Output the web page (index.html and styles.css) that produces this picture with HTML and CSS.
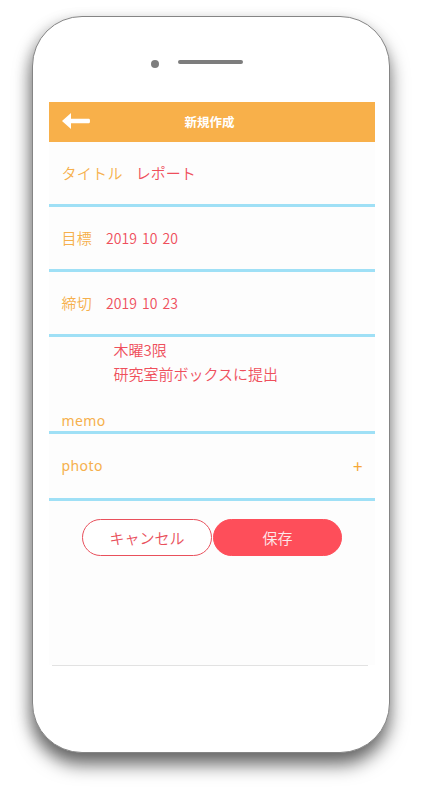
FILE: index.html
```html
<!DOCTYPE html>
<html lang="ja">
<head>
<meta charset="utf-8">
<link rel="stylesheet" href="styles.css">
</head>
<body>
<div class="phone">
  <div class="top">
    <span class="cam"></span>
    <span class="speaker"></span>
  </div>
  <div class="screen">
    <header class="bar">
      <svg class="back" width="28" height="16" viewBox="0 0 28 16"><path d="M0 8 L9 0 L9 5.8 L27 5.8 Q28 5.8 28 8 Q28 10.2 27 10.2 L9 10.2 L9 16 Z" fill="#fff"/></svg>
      <span class="bar-title">新規作成</span>
    </header>
    <div class="content">
      <div class="row row-title"><span class="label">タイトル</span><span class="val">レポート</span></div>
      <div class="row"><span class="label">目標</span><span class="val num">2019 10 20</span></div>
      <div class="row"><span class="label">締切</span><span class="val num">2019 10 23</span></div>
      <div class="memo">
        <div class="memo-text">木曜3限<br>研究室前ボックスに提出</div>
        <div class="label latin">memo</div>
      </div>
      <div class="row photo"><span class="label latin">photo</span><span class="plus">+</span></div>
      <div class="buttons">
        <button class="btn cancel">キャンセル</button>
        <button class="btn save">保存</button>
      </div>
    </div>
    <div class="bottom-line"></div>
  </div>
</div>
</body>
</html>
```

FILE: styles.css
```css
* { box-sizing: border-box; }
html, body { margin: 0; padding: 0; background: #fff; }
body {
  font-family: "Noto Sans CJK JP", "Noto Sans", sans-serif;
  width: 422px; height: 798px; overflow: hidden;
}
.phone {
  margin: 16px 0 0 32px;
  width: 358px;
  height: 737px;
  border: 1.5px solid #858585;
  border-radius: 50px;
  background: #fff;
  box-shadow: 0 12px 18px rgba(0,0,0,0.55), -4px 4px 14px rgba(0,0,0,0.15);
}
.top {
  height: 84.5px;
  display: flex;
  align-items: center;
  padding-left: 117.5px;
  padding-top: 6px;
  gap: 19px;
}
.cam {
  width: 8px; height: 8px; border-radius: 50%;
  background: #7d7d7d;
  margin-top: 3px;
}
.speaker {
  width: 65px; height: 4px; border-radius: 2px;
  background: #7d7d7d;
}
.screen {
  margin-left: 15.5px;
  width: 326px;
}
.bar {
  height: 40px;
  background: #f8b04a;
  display: flex;
  align-items: center;
  position: relative;
}
.back { position: absolute; left: 13px; top: 11px; }
.bar-title {
  flex: 1; text-align: center;
  color: #fff; font-weight: 700; font-size: 12.5px;
  margin-left: -4px;
}
.content { background: #fdfdfd; height: 523px; }
.row {
  height: 65px;
  border-bottom: 3px solid #9fe0f6;
  display: flex;
  align-items: center;
  padding-left: 13px;
  font-size: 15px;
}
.label { color: #f6b04c; font-weight: 350; font-size: 15px; letter-spacing: 0.3px; }
.val { color: #ef4f5c; margin-left: 14px; font-weight: 350; }
.num { font-size: 14px; word-spacing: 2px; margin-left: 14px; }
.row-title .val { margin-left: 13px; }
.memo {
  height: 97px;
  border-bottom: 3px solid #9fe0f6;
  display: flex; flex-direction: column;
  padding-left: 13px;
  padding-top: 1px;
}
.memo-text {
  color: #ef4f5c; font-size: 15px; font-weight: 350;
  line-height: 24px; padding-left: 52px;
}
.latin { font-family: "Noto Sans", sans-serif; font-size: 14px; font-weight: 400; letter-spacing: 0.4px; }
.memo .label { margin-top: auto; line-height: 20px; padding-bottom: 0; }
.photo { justify-content: space-between; padding-right: 12px; height: 67px; }
.plus { color: #f6a838; font-size: 17px; font-weight: 400; }
.buttons {
  display: flex; justify-content: center;
  padding-top: 18px; padding-left: 1px;
}
.btn {
  width: 130px; height: 37px; border-radius: 19px;
  font-family: "Noto Sans CJK JP", sans-serif; font-size: 15px; font-weight: 350;
  padding: 0; cursor: pointer;
}
.cancel { background: #fff; border: 1px solid #e9505c; color: #e9505c; }
.save { background: #fe4e5a; border: 1px solid #fe4e5a; color: #fde8ea; margin-left: 1px; width: 129px; }
.bottom-line { height: 1px; background: #e2e2e2; margin: 0 7px 0 3px; }
```
